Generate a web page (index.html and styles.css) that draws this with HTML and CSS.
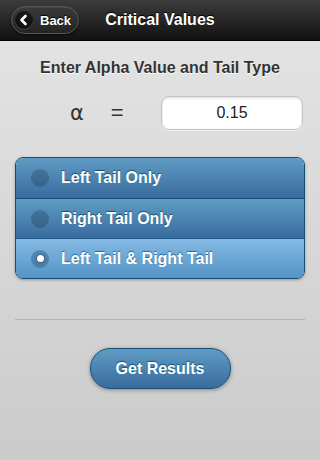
FILE: index.html
```html
<!DOCTYPE html>
<html lang="en">
<head>
  <meta charset="UTF-8">
  <title>Critical Values</title>
  <link rel="stylesheet" href="styles.css">
</head>
<body>
  <div class="header">
    <a class="back" href="#">
      <span class="back-icon">
        <svg width="18" height="18" viewBox="0 0 18 18"><path d="M10.5 5 L6.5 9 L10.5 13" fill="none" stroke="#fff" stroke-width="2.6" stroke-linecap="round" stroke-linejoin="round"/></svg>
      </span>
      Back
    </a>
    <h1>Critical Values</h1>
    <div></div>
  </div>

  <div class="content">
    <h3>Enter Alpha Value and Tail Type</h3>

    <div class="alpha-row">
      <span class="alpha">α</span>
      <span class="equals">=</span>
      <input type="text" class="alpha-input" value="0.15">
    </div>

    <div class="tails">
      <label class="tail"><span class="radio"></span>Left Tail Only</label>
      <label class="tail"><span class="radio"></span>Right Tail Only</label>
      <label class="tail checked"><span class="radio"></span>Left Tail &amp; Right Tail</label>
    </div>

    <hr class="sep">

    <div class="actions">
      <button class="results">Get Results</button>
    </div>
  </div>
</body>
</html>
```

FILE: styles.css
```css
html, body {
  margin: 0;
  height: 100%;
}
body {
  font-family: "Liberation Sans", Arial, sans-serif;
  background: linear-gradient(#e5e5e5, #cbcbcb);
  color: #333;
}
.header {
  height: 40px;
  border-bottom: 1px solid #000;
  background: linear-gradient(#3c3c3c, #111);
  display: grid;
  grid-template-columns: 1fr auto 1fr;
  align-items: center;
}
.header h1 {
  margin: 0;
  color: #fff;
  font-size: 16px;
  font-weight: bold;
  text-shadow: 0 -1px 1px #000;
}
.back {
  justify-self: start;
  margin-left: 11px;
  height: 26px;
  width: 63px;
  box-sizing: content-box;
  border: 1px solid #555;
  border-radius: 15px;
  background: linear-gradient(#3a3a3a, #242424);
  box-shadow: inset 0 1px 0 rgba(255,255,255,.08), 0 1px 2px rgba(0,0,0,.6);
  display: flex;
  align-items: center;
  gap: 7px;
  padding-left: 3px;
  color: #fff;
  font-size: 13px;
  font-weight: bold;
  text-decoration: none;
  text-shadow: 0 -1px 1px #000;
}
.back-icon {
  width: 18px;
  height: 18px;
  border-radius: 50%;
  background: rgba(0,0,0,.55);
  box-shadow: 0 1px 0 rgba(255,255,255,.15);
  display: flex;
}
.content {
  padding: 17px 15px 0;
}
.content h3 {
  margin: 0;
  text-align: center;
  font-size: 16px;
  line-height: 20px;
  font-weight: bold;
  text-shadow: 0 1px 0 #fff;
}
.alpha-row {
  display: flex;
  align-items: center;
  margin-top: 18px;
  height: 34px;
}
.alpha {
  margin-left: 55px;
  font-family: "DejaVu Sans", sans-serif;
  font-size: 21px;
  color: #333;
}
.equals {
  margin-left: 27px;
  font-size: 22px;
  color: #333;
}
.alpha-input {
  margin-left: auto;
  margin-right: 2px;
  width: 142px;
  height: 34px;
  box-sizing: border-box;
  border: 1px solid #c4c4c4;
  border-radius: 8px;
  background: #fff;
  box-shadow: inset 0 1px 3px rgba(0,0,0,.15), 0 1px 0 rgba(255,255,255,.6);
  text-align: center;
  font-family: "Liberation Sans", Arial, sans-serif;
  font-size: 16px;
  color: #222;
}
.tails {
  margin-top: 27px;
  border: 1px solid #145072;
  border-radius: 8px;
  overflow: hidden;
  box-shadow: 0 1px 3px rgba(0,0,0,.3);
}
.tail {
  display: flex;
  align-items: center;
  height: 39px;
  padding-left: 15px;
  gap: 12px;
  color: #fff;
  font-size: 16px;
  font-weight: bold;
  text-shadow: 0 -1px 1px #145072;
  background: linear-gradient(#5f9cc5, #396b9e);
  border-top: 1px solid #145072;
}
.tail:first-child {
  border-top: 0;
  height: 40px;
}
.tail.checked {
  background: linear-gradient(#85bae4, #5393c5);
  border-top-color: #1d5a87;
  text-shadow: 0 -1px 1px #2a6496;
}
.radio {
  width: 18px;
  height: 18px;
  border-radius: 50%;
  background: rgba(0,0,0,.18);
  display: flex;
  align-items: center;
  justify-content: center;
}
.checked .radio {
  background: rgba(30,70,110,.35);
}
.checked .radio::after {
  content: "";
  width: 7px;
  height: 7px;
  border-radius: 50%;
  background: #fff;
  box-shadow: 0 0 3px rgba(0,0,0,.6);
}
.sep {
  margin: 40px 0 0;
  border: 0;
  border-top: 1px solid #b5b5b5;
}
.actions {
  display: flex;
  justify-content: center;
  margin-top: 28px;
}
.results {
  width: 141px;
  height: 41px;
  border: 1px solid #145072;
  border-radius: 20px;
  background: linear-gradient(#5f9cc5, #396b9e);
  box-shadow: 0 1px 4px rgba(0,0,0,.35);
  color: #fff;
  font-family: "Liberation Sans", Arial, sans-serif;
  font-size: 16px;
  font-weight: bold;
  text-shadow: 0 -1px 1px #145072;
}
```
